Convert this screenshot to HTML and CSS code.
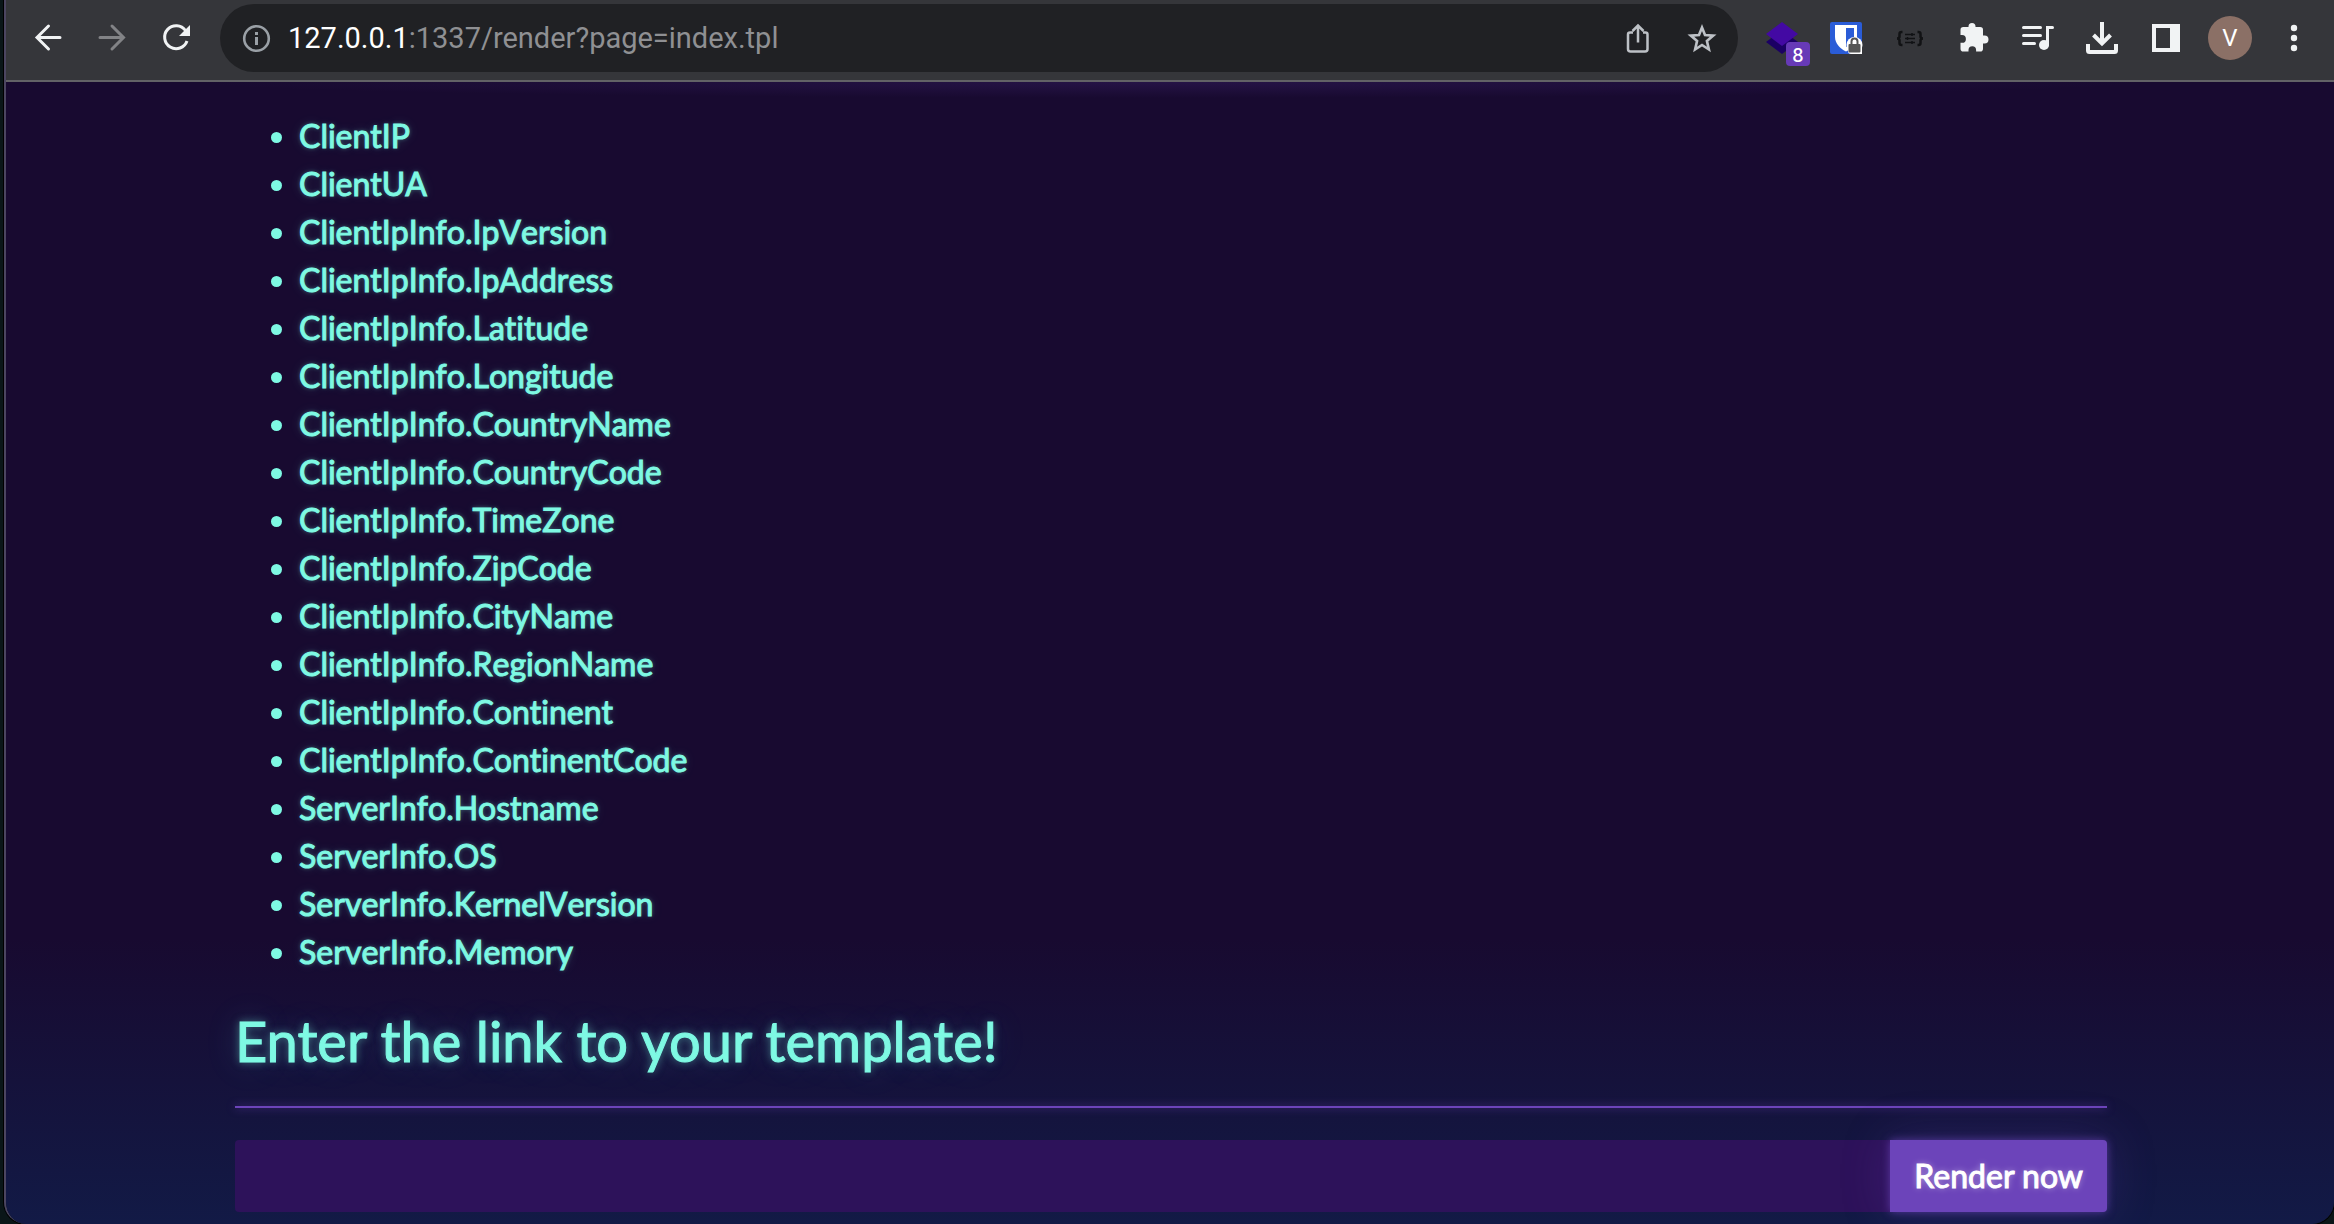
FILE: index.html
```html
<!DOCTYPE html>
<html lang="en">
<head>
<meta charset="utf-8">
<title>Template renderer</title>
<link rel="stylesheet" href="styles.css">
</head>
<body>
<div class="window">
  <header class="toolbar">
    <nav class="nav">
      <button class="tool" aria-label="Back"><svg viewBox="0 0 64 64" fill="none" stroke="#f1f3f4" stroke-width="3"><path d="M44 31.500H22M32.500 20 21 31.500 32.500 43" stroke-linecap="round"/></svg></button>
      <button class="tool" aria-label="Forward"><svg viewBox="0 0 64 64" fill="none" stroke="#828386" stroke-width="3"><path d="M20 31.500H43M32 20 43.500 31.500 32 43" stroke-linecap="round"/></svg></button>
      <button class="tool" aria-label="Reload"><svg viewBox="0 0 64 64"><path d="M41.500 24.500A11.500 11.500 0 1 0 43 35" fill="none" stroke="#f1f3f4" stroke-width="3"/><path d="M46 19V30H35Z" fill="#f1f3f4"/></svg></button>
    </nav>
    <div class="omnibox">
      <button class="tool" aria-label="Site information"><svg viewBox="0 0 64 64"><circle cx="32.500" cy="32.500" r="12.300" fill="none" stroke="#9aa0a6" stroke-width="2.600"/><path d="M31 26h3v3h-3zM31 31h3v8h-3z" fill="#9aa0a6"/></svg></button>
      <div class="url" role="textbox" aria-label="Address"><span class="host">127.0.0.1</span>:1337/render?page=index.tpl</div>
      <button class="tool" aria-label="Share"><svg viewBox="0 0 64 64" fill="none" stroke="#bdc1c6" stroke-width="2.500"><path d="M27 26.500H24a2 2 0 0 0-2 2V43a2.500 2.500 0 0 0 2.500 2.500H39A2.500 2.500 0 0 0 41.500 43V28.500a2 2 0 0 0-2-2H37"/><path d="M32 36.500V20M26.500 25 32 19.500 37.500 25"/></svg></button>
      <button class="tool" aria-label="Bookmark"><svg viewBox="0 0 64 64" fill="none" stroke="#bdc1c6" stroke-width="2.600"><path d="M32 21.500 35 29.100 43.200 29.600 36.900 34.900 38.900 43.500 32 39 25.100 43.500 27.100 34.900 20.800 29.600 29 29.100Z"/></svg></button>
    </div>
    <div class="extensions">
      <button class="tool" aria-label="Layers extension"><svg viewBox="0 0 64 64"><path d="M16 36 32 24 48 36 32 48Z" fill="#1b0064"/><path d="M16 28 32 16 48 28 32 40Z" fill="#4309a3"/></svg><span class="badge">8</span></button>
      <button class="tool" aria-label="Password manager"><svg viewBox="0 0 64 64"><rect x="16" y="16" width="32" height="32" rx="2" fill="#2a5cd7"/><path d="M21 19H43V31C43 38 37 43 32 45.500 27 43 21 38 21 31Z" fill="#fff"/><path d="M32 22H40V31C40 35 36 39 32 41Z" fill="#2a5cd7"/><circle cx="40.500" cy="39" r="8" fill="#fff"/><path d="M34 40h14v8h-11a3 3 0 0 1-3-3z" fill="#fff"/><path d="M37.500 38V35.500a3 3 0 0 1 6 0V38" fill="none" stroke="#555" stroke-width="2"/><rect x="34.500" y="38" width="12" height="8.500" rx="1" fill="#555"/></svg></button>
      <button class="tool" aria-label="JSON formatter"><svg viewBox="0 0 64 64" fill="none" stroke="#111214"><path d="M24.500 26h-1q-2 0-2 2v2.500q0 2-2.500 2 2.500 0 2.500 2V37q0 2 2 2h1M39.500 26h1q2 0 2 2v2.500q0 2 2.500 2-2.500 0-2.500 2V37q0 2-2 2h-1" stroke-width="2.500"/><path d="M27 28.500H37M27 32.500H37M27 36.500H37" stroke-width="1.600"/><path d="M34 27v3M29.500 31v3M34 35v3" stroke-width="1.500"/></svg></button>
      <button class="tool" aria-label="Extensions"><svg viewBox="0 0 64 64"><path d="M42.500 29.500H41V23.800A2.800 2.800 0 0 0 38.200 21H33.500V20.500a3.500 3.500 0 0 0-7 0V21H21.300A2.800 2.800 0 0 0 18.500 23.800V29H20a3.900 3.900 0 0 1 0 7.800H18.500V42.800A2.800 2.800 0 0 0 21.300 45.600H26.500V44a3.800 3.800 0 0 1 7.600 0V45.600H38.200A2.800 2.800 0 0 0 41 42.800V37.500H42.500a4 4 0 0 0 0-8Z" fill="#f1f3f4"/></svg></button>
      <button class="tool" aria-label="Media controls"><svg viewBox="0 0 64 64"><path d="M17.500 21.500H34.500M17.500 29.500H34.500M17.500 37.500H28.500" fill="none" stroke="#f1f3f4" stroke-width="3" stroke-linecap="round"/><circle cx="38" cy="39" r="5" fill="#f1f3f4"/><path d="M41.500 39V21.500H46.500" fill="none" stroke="#f1f3f4" stroke-width="3" stroke-linecap="round"/></svg></button>
      <button class="tool" aria-label="Downloads"><svg viewBox="0 0 64 64" fill="none" stroke="#f1f3f4" stroke-width="4"><path d="M32 16V37M23.500 29 32 37.500 40.500 29"/><path d="M18 38V44.500a1.500 1.500 0 0 0 1.500 1.500H44.500a1.500 1.500 0 0 0 1.500-1.500V38"/></svg></button>
      <button class="tool" aria-label="Side panel"><svg viewBox="0 0 64 64"><path d="M18 18H46V46H18ZM22 22V42H36V22Z" fill="#f1f3f4" fill-rule="evenodd"/></svg></button>
      <button class="tool" aria-label="Profile"><span class="avatar">V</span></button>
      <button class="tool" aria-label="Menu"><svg viewBox="0 0 64 64" fill="#f1f3f4"><circle cx="32" cy="22" r="3.200"/><circle cx="32" cy="32" r="3.200"/><circle cx="32" cy="42" r="3.200"/></svg></button>
    </div>
  </header>
  <main class="page">
    <div class="container">
      <ul class="fields">
        <li>ClientIP</li>
        <li>ClientUA</li>
        <li>ClientIpInfo.IpVersion</li>
        <li>ClientIpInfo.IpAddress</li>
        <li>ClientIpInfo.Latitude</li>
        <li>ClientIpInfo.Longitude</li>
        <li>ClientIpInfo.CountryName</li>
        <li>ClientIpInfo.CountryCode</li>
        <li>ClientIpInfo.TimeZone</li>
        <li>ClientIpInfo.ZipCode</li>
        <li>ClientIpInfo.CityName</li>
        <li>ClientIpInfo.RegionName</li>
        <li>ClientIpInfo.Continent</li>
        <li>ClientIpInfo.ContinentCode</li>
        <li>ServerInfo.Hostname</li>
        <li>ServerInfo.OS</li>
        <li>ServerInfo.KernelVersion</li>
        <li>ServerInfo.Memory</li>
      </ul>
      <h1 class="title"><label for="link">Enter the link to your template!</label></h1>
      <hr class="rule">
      <form class="render-form">
        <input class="link-input" id="link" type="text" name="page">
        <button class="render-button" type="button">Render now</button>
      </form>
    </div>
  </main>
</div>
</body>
</html>
```
FILE: styles.css
```css
* {
  box-sizing: border-box;
}

body {
  margin: 0;
  padding-left: 4px;
  min-height: 100vh;
  background: #0a1618;
  display: flex;
}

.window {
  flex: 1;
  display: flex;
  flex-direction: column;
  overflow: hidden;
  border-radius: 0 0 22px 22px;
  border-left: 2px solid #4b4560;
  box-shadow: 0 0 0 1px #000;
}

button {
  border: 0;
  font: inherit;
  color: inherit;
}

.toolbar {
  display: flex;
  gap: 12px;
  padding: 4px 8px 8px 10px;
  background: #35363a;
  border-bottom: 2px solid #626266;
  font-family: Inter, sans-serif;
}

.nav,
.extensions {
  display: flex;
}

.tool {
  position: relative;
  display: flex;
  align-items: center;
  justify-content: center;
  width: 64px;
  height: 68px;
  padding: 0;
  background: none;
}

.tool svg {
  width: 64px;
  height: 64px;
}

.omnibox {
  flex: 1;
  display: flex;
  align-items: center;
  padding: 0 4px;
  border-radius: 34px;
  background: #202124;
}

.url {
  flex: 1;
  font-family: Roboto, sans-serif;
  font-size: 29px;
  line-height: 36px;
  color: #8f9093;
}

.host {
  color: #fff;
}

.badge {
  position: absolute;
  left: 36px;
  top: 38px;
  width: 24px;
  height: 24px;
  border-radius: 4px;
  background: #673ab7;
  color: #fff;
  font-size: 18px;
  font-weight: 500;
  line-height: 28px;
  text-align: center;
}

.avatar {
  width: 44px;
  height: 44px;
  border-radius: 50%;
  background: #8b7066;
  color: #fff;
  font-family: Roboto, sans-serif;
  font-size: 24px;
  line-height: 44px;
  text-align: center;
}

.page {
  flex: 1;
  padding: 30px 16px 12px 18px;
  background:
    radial-gradient(42% 16px at 50% 0, rgba(108, 68, 186, 0.16), transparent),
    linear-gradient(#180a30 0%, #180a30 75%, #121a46 100%);
  font-family: Lato, sans-serif;
  font-size: 32px;
  font-variant-ligatures: none;
  line-height: 48px;
  color: #7ef9e3;
  -webkit-text-stroke: 1px currentColor;
}

.container {
  max-width: 1872px;
  margin: 0 auto;
}

.fields {
  margin: 0;
  padding-left: 64px;
  font-kerning: none;
  text-shadow: 0 0 4px rgba(126, 249, 227, 0.4), 0 0 12px rgba(126, 249, 227, 0.2);
}

.title {
  margin: 31px 0;
  font-size: 56px;
  font-weight: 400;
  line-height: 68px;
  text-shadow: 0 0 8px rgba(126, 249, 227, 0.5), 0 0 32px rgba(80, 180, 220, 0.3);
}

.rule {
  height: 2px;
  margin: 0 0 32px;
  border: 0;
  background: #6c44ba;
  box-shadow: 0 0 8px rgba(108, 68, 186, 0.8);
}

.render-form {
  display: flex;
}

.link-input {
  flex: 1;
  min-width: 0;
  height: 72px;
  padding: 0 24px;
  border: 0;
  border-radius: 4px 0 0 4px;
  background: #2d125a;
  color: inherit;
  font: inherit;
}

.render-button {
  height: 72px;
  padding: 0 24px;
  border-radius: 0 4px 4px 0;
  background: #6c44ba;
  box-shadow: 0 0 8px rgba(108, 68, 186, 0.7), 0 0 48px rgba(108, 68, 186, 0.25);
  color: #fff;
  text-shadow: 0 0 6px rgba(255, 255, 255, 0.5);
}
```
